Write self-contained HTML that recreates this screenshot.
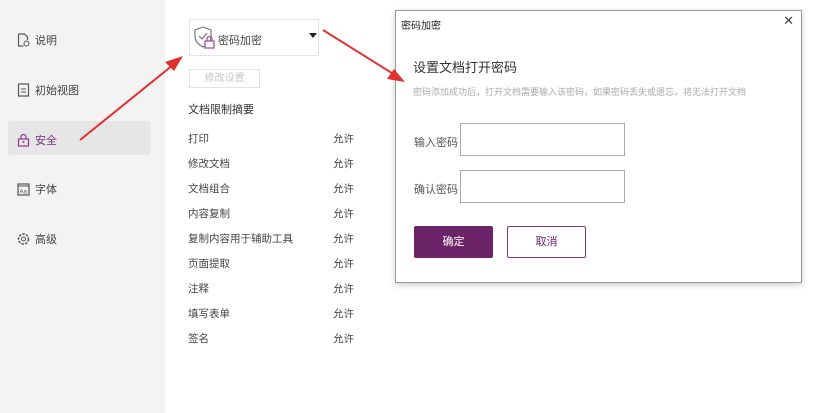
<!DOCTYPE html>
<html><head><meta charset="utf-8"><style>
*{margin:0;padding:0;box-sizing:border-box}
body{width:834px;height:413px;overflow:hidden;background:#fff;font-family:"Liberation Sans","Noto Sans CJK SC",sans-serif;color:#333;position:relative;font-size:11px}
.side{position:absolute;left:0;top:0;width:165px;height:413px;background:#f3f3f3}
.it{position:absolute;left:17px;font-size:11px;color:#444;display:flex;align-items:center;gap:5px}
.it svg{width:13px;height:14px}
.sel{position:absolute;left:8px;top:121px;width:143px;height:34px;background:#e6e6e6;border-radius:3px}
.a{position:absolute;font-size:10.5px;color:#444}
.dd{position:absolute;left:189px;top:19px;width:130px;height:37px;border:1px solid #e4e4e4;background:#fff}
.btn0{position:absolute;left:189px;top:69px;width:71px;height:19px;border:1px solid #e2e2e2;color:#c6c6c6;font-size:10px;text-align:center;line-height:17px}
.dlg{position:absolute;left:395px;top:10px;width:407px;height:273px;background:#fff;border:1px solid #9a9a9a;box-shadow:0 2px 6px rgba(0,0,0,.2)}
.inp{position:absolute;width:165px;height:33px;border:1px solid #aaa;background:#fff}
</style></head><body>
<div class="side"></div>
<div class="sel"></div>
<div class="it" style="top:32px"><svg viewBox="0 0 13 14"><path d="M1.5 1h6l3 3v3M1.5 1v12h5" fill="none" stroke="#555" stroke-width="1.2"/><circle cx="9.5" cy="10.5" r="2.5" fill="none" stroke="#555"/></svg>说明</div>
<div class="it" style="top:82px"><svg viewBox="0 0 13 14"><rect x="1.5" y="1" width="10" height="12" fill="none" stroke="#555" stroke-width="1.2"/><path d="M4 6h5M4 9h5" stroke="#555"/></svg>初始视图</div>
<div class="it" style="top:132px;color:#7a2f7a"><svg viewBox="0 0 13 14"><path d="M4 6V4a2.5 2.5 0 0 1 5 0v2" fill="none" stroke="#8a3a8a" stroke-width="1.2"/><rect x="1.5" y="6" width="10" height="7" fill="none" stroke="#8a3a8a" stroke-width="1.2"/><circle cx="6.5" cy="9" r="1" fill="#8a3a8a"/></svg>安全</div>
<div class="it" style="top:181px"><svg viewBox="0 0 13 14"><rect x="1" y="2" width="11" height="11" fill="none" stroke="#555" stroke-width="1.2"/><path d="M1 4h11" stroke="#555"/><text x="2.5" y="11.5" font-size="6" fill="#555">Aa</text></svg>字体</div>
<div class="it" style="top:231px"><svg viewBox="0 0 13 14"><circle cx="6.5" cy="7" r="5" fill="none" stroke="#555" stroke-width="1.5" stroke-dasharray="2.5 1.2"/><circle cx="6.5" cy="7" r="2" fill="none" stroke="#555"/></svg>高级</div>

<div class="dd">
<svg style="position:absolute;left:4px;top:6px" width="22" height="24" viewBox="0 0 22 24"><path d="M9 1l8 3v6c0 6-4 9-8 11-4-2-8-5-8-11V4z" fill="none" stroke="#777" stroke-width="1.2"/><path d="M5 10l3 3 5-6" fill="none" stroke="#777" stroke-width="1.2"/><rect x="11" y="15" width="9" height="7" fill="#fff" stroke="#9a4a9a" stroke-width="1.2"/><path d="M13 15v-2a2.5 2.5 0 0 1 5 0v2" fill="none" stroke="#9a4a9a" stroke-width="1.2"/></svg>
<span style="position:absolute;left:28px;top:12px;font-size:11px;color:#444">密码加密</span>
<span style="position:absolute;left:119px;top:13px;width:0;height:0;border-left:4px solid transparent;border-right:4px solid transparent;border-top:5px solid #222"></span>
</div>
<div class="btn0">修改设置</div>
<div class="a" style="left:188px;top:101px;color:#333;font-size:11px">文档限制摘要</div>
<div class="a" style="left:188px;top:131px">打印</div><div class="a" style="left:333px;top:131px">允许</div>
<div class="a" style="left:188px;top:156px">修改文档</div><div class="a" style="left:333px;top:156px">允许</div>
<div class="a" style="left:188px;top:181px">文档组合</div><div class="a" style="left:333px;top:181px">允许</div>
<div class="a" style="left:188px;top:206px">内容复制</div><div class="a" style="left:333px;top:206px">允许</div>
<div class="a" style="left:188px;top:231px">复制内容用于辅助工具</div><div class="a" style="left:333px;top:231px">允许</div>
<div class="a" style="left:188px;top:256px">页面提取</div><div class="a" style="left:333px;top:256px">允许</div>
<div class="a" style="left:188px;top:281px">注释</div><div class="a" style="left:333px;top:281px">允许</div>
<div class="a" style="left:188px;top:306px">填写表单</div><div class="a" style="left:333px;top:306px">允许</div>
<div class="a" style="left:188px;top:331px">签名</div><div class="a" style="left:333px;top:331px">允许</div>

<div class="dlg">
<div style="position:absolute;left:5px;top:6px;font-size:10px;color:#222">密码加密</div>
<div style="position:absolute;right:7px;top:2px;font-size:13px;color:#444">✕</div>
<div style="position:absolute;left:17px;top:46px;font-size:13px;color:#333">设置文档打开密码</div>
<div style="position:absolute;left:17px;top:74px;font-size:9px;color:#aaa">密码添加成功后，打开文档需要输入该密码，如果密码丢失或遗忘，将无法打开文档</div>
<div style="position:absolute;left:18px;top:123px;font-size:11px;color:#555">输入密码</div>
<div class="inp" style="left:64px;top:112px"></div>
<div style="position:absolute;left:18px;top:170px;font-size:11px;color:#555">确认密码</div>
<div class="inp" style="left:64px;top:159px"></div>
<div style="position:absolute;left:18px;top:215px;width:79px;height:32px;background:#6b2467;border-radius:2px;color:#fff;font-size:11px;text-align:center;line-height:32px">确定</div>
<div style="position:absolute;left:111px;top:215px;width:79px;height:32px;border:1px solid #7a3a76;border-radius:2px;color:#6b2467;font-size:11px;text-align:center;line-height:30px">取消</div>
</div>

<svg style="position:absolute;left:0;top:0" width="834" height="413">
<line x1="80" y1="140" x2="173" y2="65" stroke="#e03030" stroke-width="2"/>
<polygon points="183,56 165,62 174,71" fill="#e03030"/>
<line x1="323" y1="30" x2="395" y2="75" stroke="#e03030" stroke-width="2"/>
<polygon points="405,82 387,79 394,69" fill="#e03030"/>
</svg>
</body></html>
